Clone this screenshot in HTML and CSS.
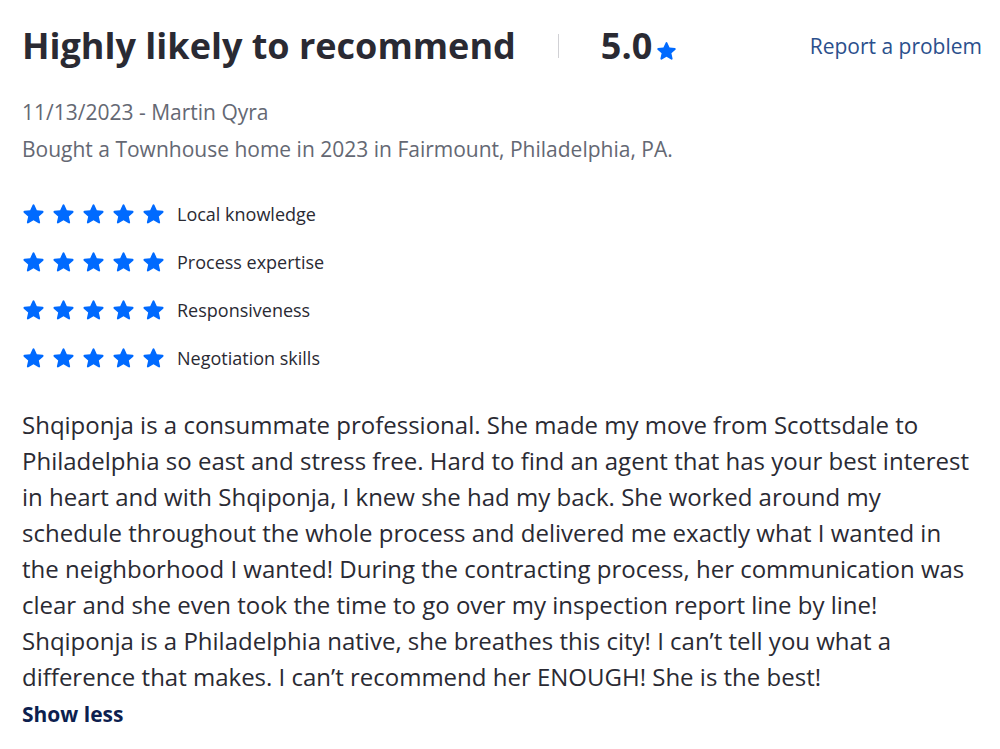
FILE: index.html
```html
<!DOCTYPE html>
<html>
<head>
<meta charset="utf-8">
<link rel="stylesheet" href="styles.css">
</head>
<body>
<svg width="0" height="0" style="position:absolute">
  <defs>
    <symbol id="star" viewBox="0 0 24 24">
      <path d="M12 2.2c.4 0 .75.23.9.6l2.3 5.1 5.55.55c.4.04.74.31.86.7.12.38 0 .8-.3 1.06l-4.2 3.7 1.23 5.45c.09.39-.06.8-.39 1.03-.32.24-.76.26-1.1.06L12 17.6l-4.85 2.85c-.34.2-.78.18-1.1-.06-.33-.23-.48-.64-.39-1.03l1.23-5.45-4.2-3.7c-.3-.26-.42-.68-.3-1.06.12-.39.46-.66.86-.7l5.55-.55 2.3-5.1c.15-.37.5-.6.9-.6z"/>
    </symbol>
  </defs>
</svg>
<div class="review">
  <div class="head">
    <h2 class="title">Highly likely to recommend</h2>
    <span class="sep"></span>
    <span class="score">5.0</span>
    <svg class="score-star"><use href="#star"/></svg>
    <a class="report" href="#">Report a problem</a>
  </div>
  <div class="meta first">11/13/2023 - Martin Qyra</div>
  <div class="meta">Bought a Townhouse home in 2023 in Fairmount, Philadelphia, PA.</div>
  <ul class="ratings">
    <li><span class="stars"><svg><use href="#star"/></svg><svg><use href="#star"/></svg><svg><use href="#star"/></svg><svg><use href="#star"/></svg><svg><use href="#star"/></svg></span><span class="label">Local knowledge</span></li>
    <li><span class="stars"><svg><use href="#star"/></svg><svg><use href="#star"/></svg><svg><use href="#star"/></svg><svg><use href="#star"/></svg><svg><use href="#star"/></svg></span><span class="label">Process expertise</span></li>
    <li><span class="stars"><svg><use href="#star"/></svg><svg><use href="#star"/></svg><svg><use href="#star"/></svg><svg><use href="#star"/></svg><svg><use href="#star"/></svg></span><span class="label">Responsiveness</span></li>
    <li><span class="stars"><svg><use href="#star"/></svg><svg><use href="#star"/></svg><svg><use href="#star"/></svg><svg><use href="#star"/></svg><svg><use href="#star"/></svg></span><span class="label">Negotiation skills</span></li>
  </ul>
  <p class="body">Shqiponja is a consummate professional. She made my move from Scottsdale to Philadelphia so east and stress free. Hard to find an agent that has your best interest in heart and with Shqiponja, I knew she had my back. She worked around my schedule throughout the whole process and delivered me exactly what I wanted in the neighborhood I wanted! During the contracting process, her communication was clear and she even took the time to go over my inspection report line by line! Shqiponja is a Philadelphia native, she breathes this city! I can’t tell you what a difference that makes. I can’t recommend her ENOUGH! She is the best!</p>
  <a class="toggle" href="#">Show less</a>
</div>
</body>
</html>
```
FILE: styles.css
```css
html, body {
  margin: 0;
  padding: 0;
  background: #fff;
}
body {
  font-family: "Open Sans", "Liberation Sans", sans-serif;
  color: #2a2a33;
}
.review {
  padding: 22px 18px 0 22px;
}
.head {
  display: flex;
  align-items: center;
  height: 48px;
}
.title {
  margin: 0;
  font-size: 36px;
  font-weight: 700;
  line-height: 48px;
  color: #2a2a33;
}
.sep {
  width: 1px;
  height: 24px;
  background: #d1d1d5;
  margin: 0 42px 0 42px;
}
.score {
  font-size: 36px;
  font-weight: 700;
  line-height: 48px;
  color: #2a2a33;
}
.score-star {
  width: 23px;
  height: 23px;
  fill: #006aff;
  margin: 10px 0 0 3px;
}
.report {
  margin-left: auto;
  font-size: 21px;
  color: #2b4f8c;
  text-decoration: none;
}
.meta {
  font-size: 21px;
  line-height: 37px;
  color: #646873;
}
.meta.first {
  margin-top: 24px;
}
.ratings {
  list-style: none;
  margin: 22px 0 0 0;
  padding: 0;
}
.ratings li {
  display: flex;
  align-items: center;
  height: 48px;
}
.stars {
  display: flex;
  gap: 5px;
  margin-left: -1px;
}
.stars svg {
  width: 25px;
  height: 25px;
  fill: #006aff;
}
.label {
  margin-left: 11px;
  font-size: 18px;
  color: #2a2a33;
}
.body {
  margin: 25px 0 0 0;
  font-size: 24px;
  line-height: 36px;
  color: #2a2a33;
}
.toggle {
  display: inline-block;
  margin-top: 1px;
  font-size: 21px;
  font-weight: 700;
  color: #0d1f4f;
  text-decoration: none;
  line-height: 36px;
}
```
